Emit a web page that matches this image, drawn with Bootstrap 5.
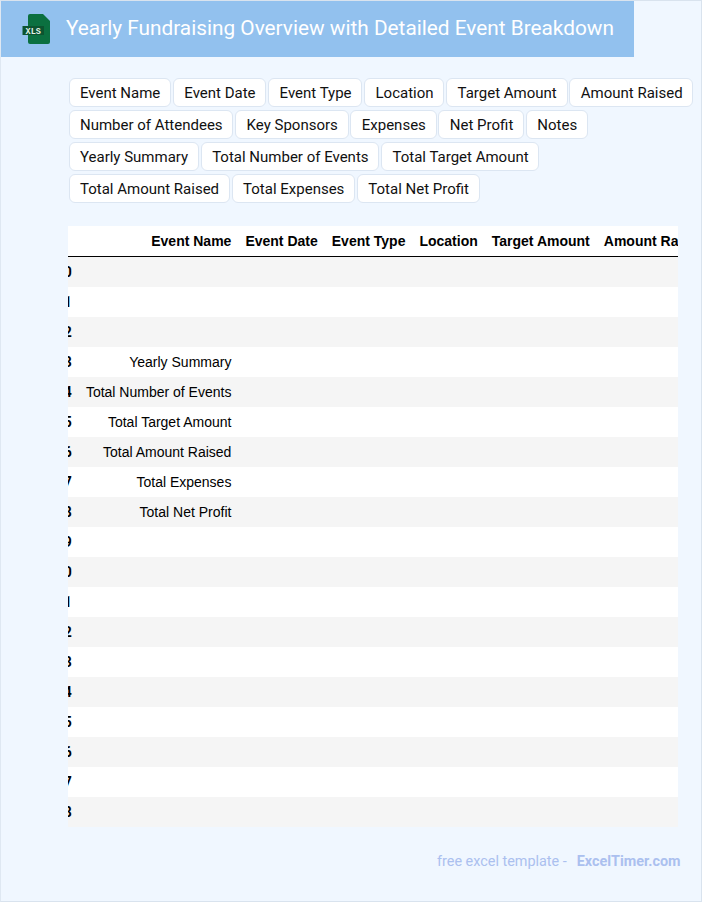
<!DOCTYPE html>
<html lang="en">
<head>
<meta charset="utf-8">
<title>Yearly Fundraising Overview</title>
<link href="https://cdn.jsdelivr.net/npm/bootstrap@5.3.0/dist/css/bootstrap.min.css" rel="stylesheet">
<style>
html,body{margin:0;height:902px;overflow:hidden}
body{font-family:Roboto,sans-serif;background:#f0f7ff}
.sheet{width:702px;height:902px;border:1px solid #d9e3ee;border-left-color:#dfe8f2;background:#f0f7ff;display:flex;flex-direction:column}
.banner{width:633px;height:56px;background:#92c1ee;color:#fff;font-size:20.8px;padding-left:21px;gap:15px;flex:none}
.banner-title{line-height:52px;margin-bottom:2px;white-space:nowrap}
.chips{margin:21px 0 0 67.6px;width:632px;gap:3px 1.8px;flex:none}
.chip{display:block;height:29px;padding:0 9.8px 0 10.4px;line-height:29px;font-size:15px;color:#111;background:#fff;border:1px solid #dce6f2;border-radius:6px;white-space:nowrap}
.sheet-wrap{margin:23px 0 0 67px;width:610px;height:601px;overflow:hidden;background:#fff;flex:none}
.sheet-table{border-collapse:separate;border-spacing:0;font-family:"Liberation Sans",Arial,sans-serif;font-size:14px;color:#000;margin-left:-19.2px;width:auto}
.sheet-table th,.sheet-table td{padding:0 7px;height:30px;text-align:right;white-space:nowrap;font-weight:400;vertical-align:middle;background:transparent;border:0}
.sheet-table thead th{font-weight:700;border-bottom:1px solid #000;height:31px}
.sheet-table tbody th{font-weight:700;font-family:Roboto,sans-serif}
.sheet-table tbody tr:nth-child(odd){background:#f5f5f5}
.foot{margin-top:24px;padding-right:20.5px;font-size:14.4px;color:#abc0ef;justify-content:flex-end;gap:10px}
.foot b{font-weight:700}
</style>
</head>
<body>
<div class="sheet">
  <div class="banner d-flex align-items-center">
    <svg width="29" height="32" viewBox="0 0 29 32" aria-hidden="true">
      <path d="M8 1H21L28 8V29a2 2 0 0 1-2 2H8a2 2 0 0 1-2-2V3a2 2 0 0 1 2-2Z" fill="#0b7040"/>
      <rect x="0.500" y="13" width="21.500" height="9" fill="#0c5430"/>
      <text x="11.200" y="20.800" text-anchor="middle" font-family="Liberation Mono,monospace" font-size="8.500" font-weight="700" fill="#e4f3ea">XLS</text>
    </svg>
    <div class="banner-title">Yearly Fundraising Overview with Detailed Event Breakdown</div>
  </div>
  <div class="chips d-flex flex-wrap">
    <span class="chip">Event Name</span><span class="chip">Event Date</span><span class="chip">Event Type</span><span class="chip">Location</span><span class="chip">Target Amount</span><span class="chip">Amount Raised</span>
    <span class="chip">Number of Attendees</span><span class="chip">Key Sponsors</span><span class="chip">Expenses</span><span class="chip">Net Profit</span><span class="chip">Notes</span>
    <span class="chip">Yearly Summary</span><span class="chip">Total Number of Events</span><span class="chip">Total Target Amount</span>
    <span class="chip">Total Amount Raised</span><span class="chip">Total Expenses</span><span class="chip">Total Net Profit</span>
  </div>
  <div class="sheet-wrap">
    <table class="sheet-table">
      <thead><tr><th></th><th>Event Name</th><th>Event Date</th><th>Event Type</th><th>Location</th><th>Target Amount</th><th>Amount Raised</th><th>Number of Attendees</th></tr></thead>
      <tbody>
        <tr><th>10</th><td></td><td></td><td></td><td></td><td></td><td></td><td></td></tr>
        <tr><th>11</th><td></td><td></td><td></td><td></td><td></td><td></td><td></td></tr>
        <tr><th>12</th><td></td><td></td><td></td><td></td><td></td><td></td><td></td></tr>
        <tr><th>13</th><td>Yearly Summary</td><td></td><td></td><td></td><td></td><td></td><td></td></tr>
        <tr><th>14</th><td>Total Number of Events</td><td></td><td></td><td></td><td></td><td></td><td></td></tr>
        <tr><th>15</th><td>Total Target Amount</td><td></td><td></td><td></td><td></td><td></td><td></td></tr>
        <tr><th>16</th><td>Total Amount Raised</td><td></td><td></td><td></td><td></td><td></td><td></td></tr>
        <tr><th>17</th><td>Total Expenses</td><td></td><td></td><td></td><td></td><td></td><td></td></tr>
        <tr><th>18</th><td>Total Net Profit</td><td></td><td></td><td></td><td></td><td></td><td></td></tr>
        <tr><th>19</th><td></td><td></td><td></td><td></td><td></td><td></td><td></td></tr>
        <tr><th>20</th><td></td><td></td><td></td><td></td><td></td><td></td><td></td></tr>
        <tr><th>21</th><td></td><td></td><td></td><td></td><td></td><td></td><td></td></tr>
        <tr><th>22</th><td></td><td></td><td></td><td></td><td></td><td></td><td></td></tr>
        <tr><th>23</th><td></td><td></td><td></td><td></td><td></td><td></td><td></td></tr>
        <tr><th>24</th><td></td><td></td><td></td><td></td><td></td><td></td><td></td></tr>
        <tr><th>25</th><td></td><td></td><td></td><td></td><td></td><td></td><td></td></tr>
        <tr><th>26</th><td></td><td></td><td></td><td></td><td></td><td></td><td></td></tr>
        <tr><th>27</th><td></td><td></td><td></td><td></td><td></td><td></td><td></td></tr>
        <tr><th>28</th><td></td><td></td><td></td><td></td><td></td><td></td><td></td></tr>
      </tbody>
    </table>
  </div>
  <div class="foot d-flex"><span>free excel template -</span><b>ExcelTimer.com</b></div>
</div>
</body>
</html>
